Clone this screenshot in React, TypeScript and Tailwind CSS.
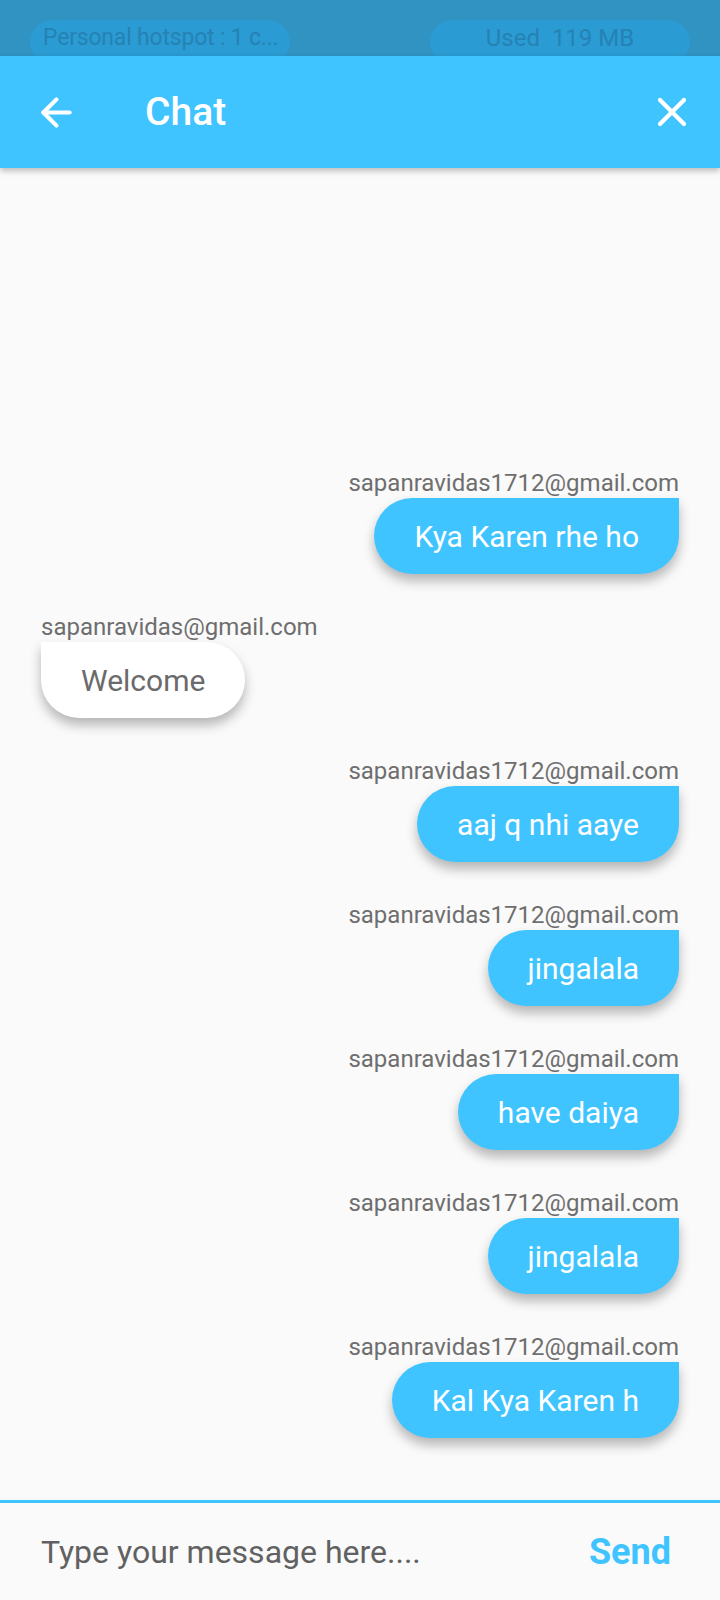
import { ArrowLeft, X } from "lucide-react"

type Msg = { from: string; text: string; mine: boolean }

const messages: Msg[] = [
  { from: "sapanravidas1712@gmail.com", text: "Kya Karen rhe ho", mine: true },
  { from: "sapanravidas@gmail.com", text: "Welcome", mine: false },
  { from: "sapanravidas1712@gmail.com", text: "aaj q nhi aaye", mine: true },
  { from: "sapanravidas1712@gmail.com", text: "jingalala", mine: true },
  { from: "sapanravidas1712@gmail.com", text: "have daiya", mine: true },
  { from: "sapanravidas1712@gmail.com", text: "jingalala", mine: true },
  { from: "sapanravidas1712@gmail.com", text: "Kal Kya Karen h", mine: true },
]

function Bubble({ msg }: { msg: Msg }) {
  return (
    <div className={`flex flex-col mb-[38px] ${msg.mine ? "items-end" : "items-start"}`}>
      <div className="text-[24px] leading-[30px] text-[#6e6e6e]">{msg.from}</div>
      <div
        className={`h-[76px] px-[40px] flex items-center text-[30px] shadow-[0_7px_12px_rgba(0,0,0,0.28)] ${
          msg.mine
            ? "bg-[#40c4ff] text-white rounded-[38px] rounded-tr-none"
            : "bg-white text-[#6b6b6b] rounded-[38px] rounded-tl-none"
        }`}
      >
        {msg.text}
      </div>
    </div>
  )
}

export default function App() {
  return (
    <div className="w-[720px] h-[1600px] flex flex-col bg-[#fafafa] overflow-hidden font-['Roboto',sans-serif]">
      {/* status bar */}
      <div className="h-[56px] bg-[#3093c2] flex items-start pt-[20px] px-[30px] justify-between overflow-hidden shrink-0">
        <div className="w-[260px] h-[44px] rounded-full bg-[#2a9bd3] pl-[13px] pt-[3px] text-[23px] leading-[30px] tracking-[-0.2px] text-[#2682b3] whitespace-nowrap">
          Personal hotspot : 1 c...
        </div>
        <div className="w-[260px] h-[44px] rounded-full bg-[#2a9bd3] pt-[3px] text-center text-[24px] leading-[30px] text-[#2682b3] whitespace-pre">
          Used  119 MB
        </div>
      </div>

      {/* app bar */}
      <div className="h-[112px] bg-[#40c4ff] flex items-center shrink-0 shadow-[0_3px_6px_rgba(0,0,0,0.25)] relative z-10">
        <div className="w-[112px] flex items-center justify-center">
          <ArrowLeft size={45} color="white" strokeWidth={2.2} />
        </div>
        <div className="ml-[33px] text-[39px] font-medium text-white flex-1">Chat</div>
        <div className="w-[96px] flex items-center justify-center">
          <X size={48} color="white" strokeWidth={2.1} />
        </div>
      </div>

      {/* messages */}
      <div className="flex-1 flex flex-col justify-end px-[41px] pb-[24px]">
        {messages.map((m, i) => (
          <Bubble key={i} msg={m} />
        ))}
      </div>

      {/* input */}
      <div className="h-[3px] bg-[#40c4ff] shrink-0" />
      <div className="h-[97px] flex items-center px-[41px] shrink-0">
        <div className="flex-1 text-[32px] text-[#616161]">Type your message here....</div>
        <div className="text-[36px] font-bold text-[#40c4ff] mr-[8px]">Send</div>
      </div>
    </div>
  )
}
